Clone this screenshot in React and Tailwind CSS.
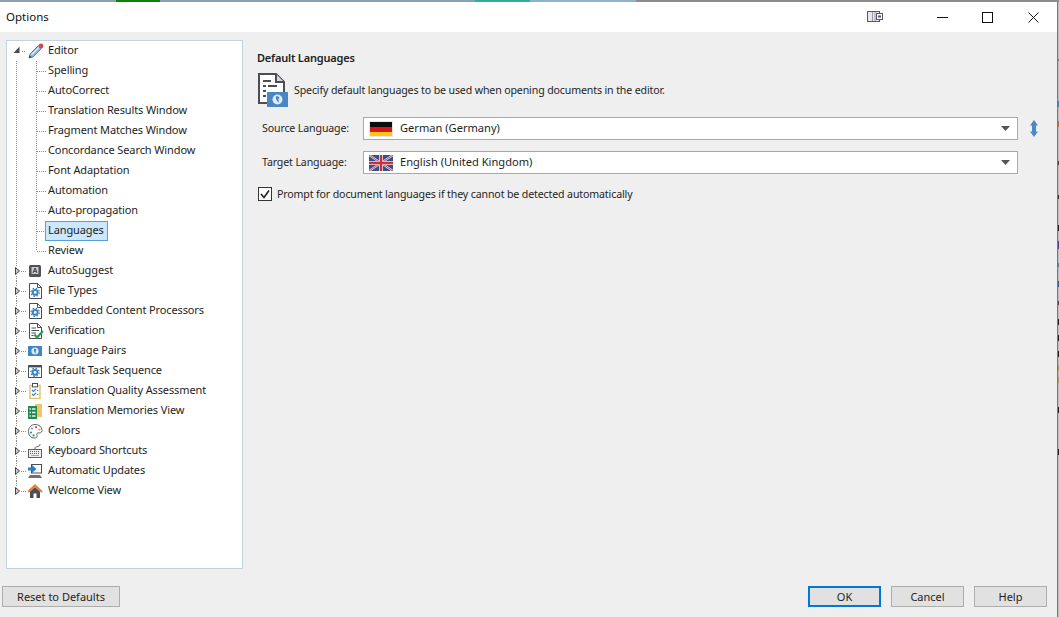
import React from 'react';

const Gear = ({ cx = 7, cy = 9 }) => (
    <g>
        <circle cx={cx} cy={cy} r="2.4" fill="none" stroke="#3d7fc4" strokeWidth="1.9" />
        <circle cx={cx} cy={cy} r="4.1" fill="none" stroke="#3d7fc4" strokeWidth="1.2" strokeDasharray="1.6 1.62" />
    </g>
);

const Page = () => (
    <path d="M1.5 .5H9.5L13.5 4.5V15.5H1.5Z M9.5 .5V4.5H13.5" fill="#fff" stroke="#4a4f57" strokeWidth="1" />
);

const PencilIcon = () => (
    <svg width="16" height="16" viewBox="0 0 16 16">
        <path d="M1 15L2.2 10.8L10.4 2.6L13.4 5.6L5.2 13.8Z" fill="#8fb5e0" stroke="#4a80bd" strokeWidth="1" />
        <path d="M3.5 11.8L11 4.4" stroke="#e3eefa" strokeWidth="1.2" />
        <path d="M1 15L1.8 12.4L3.6 14.2Z" fill="#2b3440" />
        <circle cx="13" cy="3" r="2.4" fill="#cf4a50" />
    </svg>
);

const SuggestIcon = () => (
    <svg width="16" height="16" viewBox="0 0 16 16">
        <rect x="1" y="2" width="12" height="12" rx="1.5" fill="#4f5257" />
        <rect x="3.5" y="4" width="7" height="7" fill="#c9c9c9" />
        <path d="M5 10L7 5L9 10M5.6 8.4H8.4" fill="none" stroke="#3f4247" strokeWidth="1" />
    </svg>
);

const GearPageIcon = () => (
    <svg width="16" height="16" viewBox="0 0 16 16">
        <Page />
        <Gear cx={7.2} cy={9.4} />
    </svg>
);

const VerifyIcon = () => (
    <svg width="16" height="16" viewBox="0 0 16 16">
        <Page />
        <path d="M3.5 5H8M3.5 7.5H11M3.5 10H8M3.5 12.5H5.5" stroke="#4a4f57" strokeWidth="1" />
        <path d="M6.5 11.5L9 14.5L15 8" fill="none" stroke="#2f9a57" strokeWidth="2.2" />
    </svg>
);

const PairsIcon = () => (
    <svg width="16" height="16" viewBox="0 0 16 16">
        <rect x="0" y="3" width="14" height="10" fill="#3f86c8" />
        <circle cx="7" cy="8" r="3.6" fill="#dfeaf5" />
        <path d="M6 5.4L8.4 6.4L7.6 8.4L8 10.4L6.6 9.4L5.8 7.6Z" fill="#3f86c8" />
    </svg>
);

const TaskIcon = () => (
    <svg width="16" height="16" viewBox="0 0 16 16">
        <rect x=".5" y="2.5" width="13" height="12" fill="#fff" stroke="#4a4f57" />
        <rect x="0" y="2" width="14" height="2.4" fill="#4a4f57" />
        <Gear cx={7} cy={9.4} />
    </svg>
);

const QualityIcon = () => (
    <svg width="16" height="16" viewBox="0 0 16 16">
        <rect x="2" y="2.5" width="10" height="13" fill="#fff" stroke="#e2bf66" strokeWidth="1.4" />
        <rect x="4.5" y=".5" width="5" height="3.4" fill="#fff" stroke="#4a4f57" />
        <path d="M4 7L5.5 8.5L8 5.8M4 11L5.5 12.5L8 9.8" fill="none" stroke="#3d7fc4" strokeWidth="1.2" />
        <path d="M9 7.5H10.5M9 11.5H10.5" stroke="#8a8f96" />
    </svg>
);

const MemoryIcon = () => (
    <svg width="16" height="16" viewBox="0 0 16 16">
        <rect x="7" y="1" width="7" height="13" fill="#efc566" />
        <rect x="0" y="3" width="9" height="13" fill="#1f8a4c" />
        <path d="M1.5 6H7.5M1.5 9.5H7.5M1.5 13H7.5" stroke="#e8f3ec" strokeWidth="1.6" />
        <path d="M3.5 3V16" stroke="#1f8a4c" strokeWidth="1" />
    </svg>
);

const PaletteIcon = () => (
    <svg width="16" height="16" viewBox="0 0 16 16">
        <path d="M7 1.5C11 1.5 14 4 14 7.5C14 10 11.5 10 10 10C8.5 10 8.5 11.5 9 12.5C9.6 14 8.5 15 6.5 15C2.5 15 .5 12 .5 8.5C.5 4.5 3 1.5 7 1.5Z" fill="#fff" stroke="#5b5f66" />
        <circle cx="4" cy="5.5" r="1.1" fill="#8a8f96" />
        <circle cx="8" cy="4.2" r="1.1" fill="#d9564a" />
        <circle cx="11.4" cy="6.6" r="1.1" fill="#e2a53c" />
        <circle cx="3" cy="9.5" r="1.1" fill="#3d7fc4" />
        <circle cx="5.6" cy="12.4" r="1.1" fill="#2f9a57" />
    </svg>
);

const KeyboardIcon = () => (
    <svg width="16" height="16" viewBox="0 0 16 16">
        <path d="M7 6C7 3.5 8 4 10 3.5S12 1.5 12 1" fill="none" stroke="#5b5f66" />
        <rect x=".5" y="6.5" width="13" height="8" fill="#eee" stroke="#5b5f66" />
        <path d="M2 8.5H12M2 10.5H12M3.5 12.5H10.5" stroke="#5b5f66" strokeDasharray="1 1" />
    </svg>
);

const UpdatesIcon = () => (
    <svg width="16" height="16" viewBox="0 0 16 16">
        <rect x="3.5" y="1.5" width="10" height="8.5" fill="#fff" stroke="#4a4f57" />
        <path d="M2 12H12L14 15H0Z" fill="#6d7178" />
        <path d="M0 4.5H4V2L8.5 6L4 10V7.5H0Z" fill="#2f7fc8" />
    </svg>
);

const HomeIcon = () => (
    <svg width="16" height="16" viewBox="0 0 16 16">
        <path d="M2 8.5V15H12V8.5L7 4Z" fill="#4a4f57" />
        <rect x="5.5" y="10.5" width="3" height="4.5" fill="#fff" />
        <path d="M0 9L7 2.5L14 9" fill="none" stroke="#e8812e" strokeWidth="2.2" />
    </svg>
);

const children = ['Spelling', 'AutoCorrect', 'Translation Results Window', 'Fragment Matches Window', 'Concordance Search Window', 'Font Adaptation', 'Automation', 'Auto-propagation', 'Languages', 'Review'];

const parents = [
    ['AutoSuggest', SuggestIcon],
    ['File Types', GearPageIcon],
    ['Embedded Content Processors', GearPageIcon],
    ['Verification', VerifyIcon],
    ['Language Pairs', PairsIcon],
    ['Default Task Sequence', TaskIcon],
    ['Translation Quality Assessment', QualityIcon],
    ['Translation Memories View', MemoryIcon],
    ['Colors', PaletteIcon],
    ['Keyboard Shortcuts', KeyboardIcon],
    ['Automatic Updates', UpdatesIcon],
    ['Welcome View', HomeIcon],
];

const dots = '#8d8d8d';

const ChildGuides = ({ last }) => (
    <svg width="40" height="20" viewBox="0 0 40 20" className="shrink-0">
        <path d="M9.5 0V20" stroke={dots} strokeDasharray="1 1" />
        <path d={last ? 'M29.5 0V10' : 'M29.5 0V20'} stroke={dots} strokeDasharray="1 1" />
        <path d="M30 10.5H39" stroke={dots} strokeDasharray="1 1" />
    </svg>
);

const ParentGuides = ({ last }) => (
    <svg width="21" height="20" viewBox="0 0 21 20" className="shrink-0">
        <path d={last ? 'M9.5 0V5' : 'M9.5 0V5M9.5 15V20'} stroke={dots} strokeDasharray="1 1" />
        <path d="M14 10.5H19" stroke={dots} strokeDasharray="1 1" />
        <path d="M8.5 6.5L12.5 10L8.5 13.5Z" fill="#c8c8c8" stroke="#444" />
    </svg>
);

const Flag = ({ uk }) => (
    <svg width="24" height="16" viewBox="0 0 24 16" className="shrink-0">
        {uk ? (
            <g>
                <rect width="24" height="16" fill="#34508f" />
                <path d="M0 0L24 16M24 0L0 16" stroke="#d9dce8" strokeWidth="2.2" />
                <path d="M0 0L24 16M24 0L0 16" stroke="#c8505c" strokeWidth="1" />
                <path d="M12 0V16M0 8H24" stroke="#e6e0e6" strokeWidth="4" />
                <path d="M12 0V16M0 8H24" stroke="#c8303c" strokeWidth="2.4" />
            </g>
        ) : (
            <g>
                <rect width="24" height="16" fill="#e8e8e8" />
                <rect x="1" y="1" width="22" height="5" fill="#0c0c0c" />
                <rect x="1" y="6" width="22" height="5" fill="#d8141c" />
                <rect x="1" y="11" width="22" height="4" fill="#f8c818" />
            </g>
        )}
    </svg>
);

const Select = ({ uk, value }) => (
    <div className="flex h-[23px] w-[655px] items-center border border-[#a8a8a8] bg-white pl-[5px] pr-[7px]">
        <Flag uk={uk} />
        <span className="ml-[7px] flex-1 text-[11.1px] tracking-normal">{value}</span>
        <svg width="9" height="6" viewBox="0 0 9 6"><path d="M0 0H9L4.5 5Z" fill="#555" /></svg>
    </div>
);

const Btn = ({ label, w, primary }) => (
    <div className={`flex h-[21px] items-center justify-center bg-[#e1e1e1] pt-[2px] tracking-normal ${w} ${primary ? 'border-2 border-[#0078d7]' : 'border border-[#adadad]'}`}>
        {label}
    </div>
);

const topStrip = [
    ['w-[116px]', 'bg-[#8aa0b4]'],
    ['w-[44px]', 'bg-[#0d8010]'],
    ['w-[315px]', 'bg-[#8aa0b4]'],
    ['w-[55px]', 'bg-[#2fae98]'],
    ['w-[106px]', 'bg-[#8fb2d2]'],
    ['flex-1', 'bg-[#8c8c8c]'],
];

const edgeMarks = [
    [57, '#bdbdbd'], [2, '#777'], [40, '#bdbdbd'], [6, '#3a7fb8'], [14, '#bdbdbd'], [6, '#b8742a'], [34, '#bdbdbd'], [4, '#5a3020'], [30, '#bdbdbd'],
    [4, '#4a2820'], [26, '#bdbdbd'], [6, '#222'], [10, '#bdbdbd'], [8, '#4a3f9a'], [14, '#bdbdbd'], [4, '#3a7fb8'], [14, '#bdbdbd'], [6, '#2a5fa8'],
    [14, '#bdbdbd'], [4, '#6a3050'], [14, '#bdbdbd'], [6, '#222'], [10, '#bdbdbd'], [6, '#222'], [10, '#bdbdbd'], [6, '#222'], [8, '#bdbdbd'], [6, '#b89a50'],
    [6, '#bdbdbd'], [6, '#b89a50'], [24, '#bdbdbd'], [6, '#222'], [36, '#bdbdbd'], [6, '#222'],
];

export default function App() {
    return (
        <div className="flex h-[617px] w-[1059px] flex-col overflow-hidden bg-white text-[11px] text-[#1e1e1e] [font-family:'Noto_Sans',sans-serif]">
            <div className="flex h-[2px] shrink-0">
                {topStrip.map(([w, bg], i) => <div key={i} className={`${w} ${bg}`} />)}
            </div>
            <div className="flex min-h-0 flex-1">
                <div className="flex w-[1057px] shrink-0 flex-col">
                    <div className="flex h-[30px] shrink-0 items-center bg-white pl-[6px]">
                        <span className="flex-1 text-[11.5px] text-[#111]">Options</span>
                        <svg width="16" height="12" viewBox="0 0 16 12" className="mr-[54px]">
                            <rect x=".5" y=".5" width="12" height="10" fill="#e8e8ec" stroke="#55596a" />
                            <path d="M5.5 1V10M8 1V10" stroke="#9a9cab" />
                            <rect x="9.5" y="2.5" width="6" height="6" fill="#fff" stroke="#55596a" />
                            <rect x="11" y="4.5" width="3" height="2" fill="#55596a" />
                        </svg>
                        <svg width="11" height="11" viewBox="0 0 11 11" className="mr-[34px]"><path d="M0 5.5H11" stroke="#111" /></svg>
                        <svg width="11" height="11" viewBox="0 0 11 11" className="mr-[35px]"><rect x=".5" y=".5" width="10" height="10" fill="none" stroke="#111" /></svg>
                        <svg width="11" height="11" viewBox="0 0 11 11" className="mr-[18px]"><path d="M.5 .5L10.5 10.5M10.5 .5L.5 10.5" stroke="#111" /></svg>
                    </div>
                    <div className="flex min-h-0 flex-1 flex-col bg-[#efefef]">
                        <div className="flex pl-[6px] pt-[8px]">
                            <div className="h-[529px] w-[237px] shrink-0 border border-[#c3d3dc] bg-white tracking-[-0.115px]">
                                <div className="flex h-5 items-center">
                                    <svg width="21" height="20" viewBox="0 0 21 20" className="shrink-0">
                                        <path d="M13 5.5V12H7Z" fill="#4d4d4d" transform="translate(-.5 0)" />
                                        <path d="M15 10.5H19" stroke={dots} strokeDasharray="1 1" />
                                    </svg>
                                    <PencilIcon />
                                    <span className="mb-[2px] ml-[4px]">Editor</span>
                                </div>
                                {children.map((name, i) => (
                                    <div key={name} className="flex h-5 items-center">
                                        <ChildGuides last={i === children.length - 1} />
                                        <span className={name === 'Languages' ? 'ml-[-2px] flex h-[20px] items-center border border-[#5a9fd4] bg-[#cce8ff] pb-[2px] pl-[2px] pr-[3px]' : 'mb-[2px] ml-[1px]'}>{name}</span>
                                    </div>
                                ))}
                                {parents.map(([name, Icon], i) => (
                                    <div key={name} className="flex h-5 items-center">
                                        <ParentGuides last={i === parents.length - 1} />
                                        <Icon />
                                        <span className="mb-[2px] ml-[4px]">{name}</span>
                                    </div>
                                ))}
                            </div>
                            <div className="ml-[14px] flex min-w-0 flex-1 flex-col text-[10.6px] tracking-[-0.13px]">
                                <div className="mt-[8px] h-5 text-[11px] font-semibold leading-5 tracking-[-0.2px] text-[#222]">Default Languages</div>
                                <div className="mt-[5px] flex h-[34px] items-center pl-px">
                                    <svg width="30" height="34" viewBox="0 0 30 34" className="shrink-0">
                                        <path d="M1 1H18L26 9V30H1Z" fill="#fff" stroke="#4a4f57" strokeWidth="2" />
                                        <path d="M18 1V9H26" fill="#d8d8d8" stroke="#4a4f57" strokeWidth="2" />
                                        <path d="M5 8H13M5 13H8M5 18H8M5 23H8M10 13H19" stroke="#4a4f57" strokeWidth="2" />
                                        <rect x="9" y="19" width="21" height="15" fill="#4a86c2" />
                                        <circle cx="19.5" cy="26.5" r="5" fill="#dfeaf5" />
                                        <path d="M18 23L21.5 24L20.5 26.5L21.1 29.5L19.1 28.1L17.9 25.5Z" fill="#4a86c2" />
                                    </svg>
                                    <span className="ml-[6px] mt-[2px]">Specify default languages to be used when opening documents in the editor.</span>
                                </div>
                                <div className="mt-[10px] flex items-center">
                                    <span className="ml-[5px] w-[101px]">Source Language:</span>
                                    <Select value="German (Germany)" />
                                    <svg width="8" height="17" viewBox="0 0 8 17" className="ml-[12px]">
                                        <path d="M4 0L8 5.5H6V11.5H8L4 17L0 11.5H2V5.5H0Z" fill="#4a8ac8" />
                                    </svg>
                                </div>
                                <div className="mt-[11px] flex items-center">
                                    <span className="ml-[5px] w-[101px]">Target Language:</span>
                                    <Select uk value="English (United Kingdom)" />
                                </div>
                                <div className="mt-[11px] flex items-center pl-px">
                                    <div className="flex h-[14px] w-[14px] items-center justify-center border border-[#333] bg-white">
                                        <svg width="10" height="10" viewBox="0 0 10 10"><path d="M1 5L4 8.5L9 1.5" fill="none" stroke="#222" strokeWidth="1.6" /></svg>
                                    </div>
                                    <span className="ml-[5px] mt-[2px]">Prompt for document languages if they cannot be detected automatically</span>
                                </div>
                            </div>
                        </div>
                        <div className="mt-[17px] flex pl-[2px] pr-[10px]">
                            <Btn label="Reset to Defaults" w="w-[118px]" />
                            <div className="flex-1" />
                            <div className="flex gap-[10px]">
                                <Btn label="OK" w="w-[73px]" primary />
                                <Btn label="Cancel" w="w-[73px]" />
                                <Btn label="Help" w="w-[73px]" />
                            </div>
                        </div>
                    </div>
                </div>
                <div className="w-px shrink-0 bg-[#777]" />
                <div className="flex w-px shrink-0 flex-col bg-[#bdbdbd]">
                    {edgeMarks.map(([h, c], i) => <div key={i} style={{ height: h, background: c }} />)}
                </div>
            </div>
        </div>
    );
}
